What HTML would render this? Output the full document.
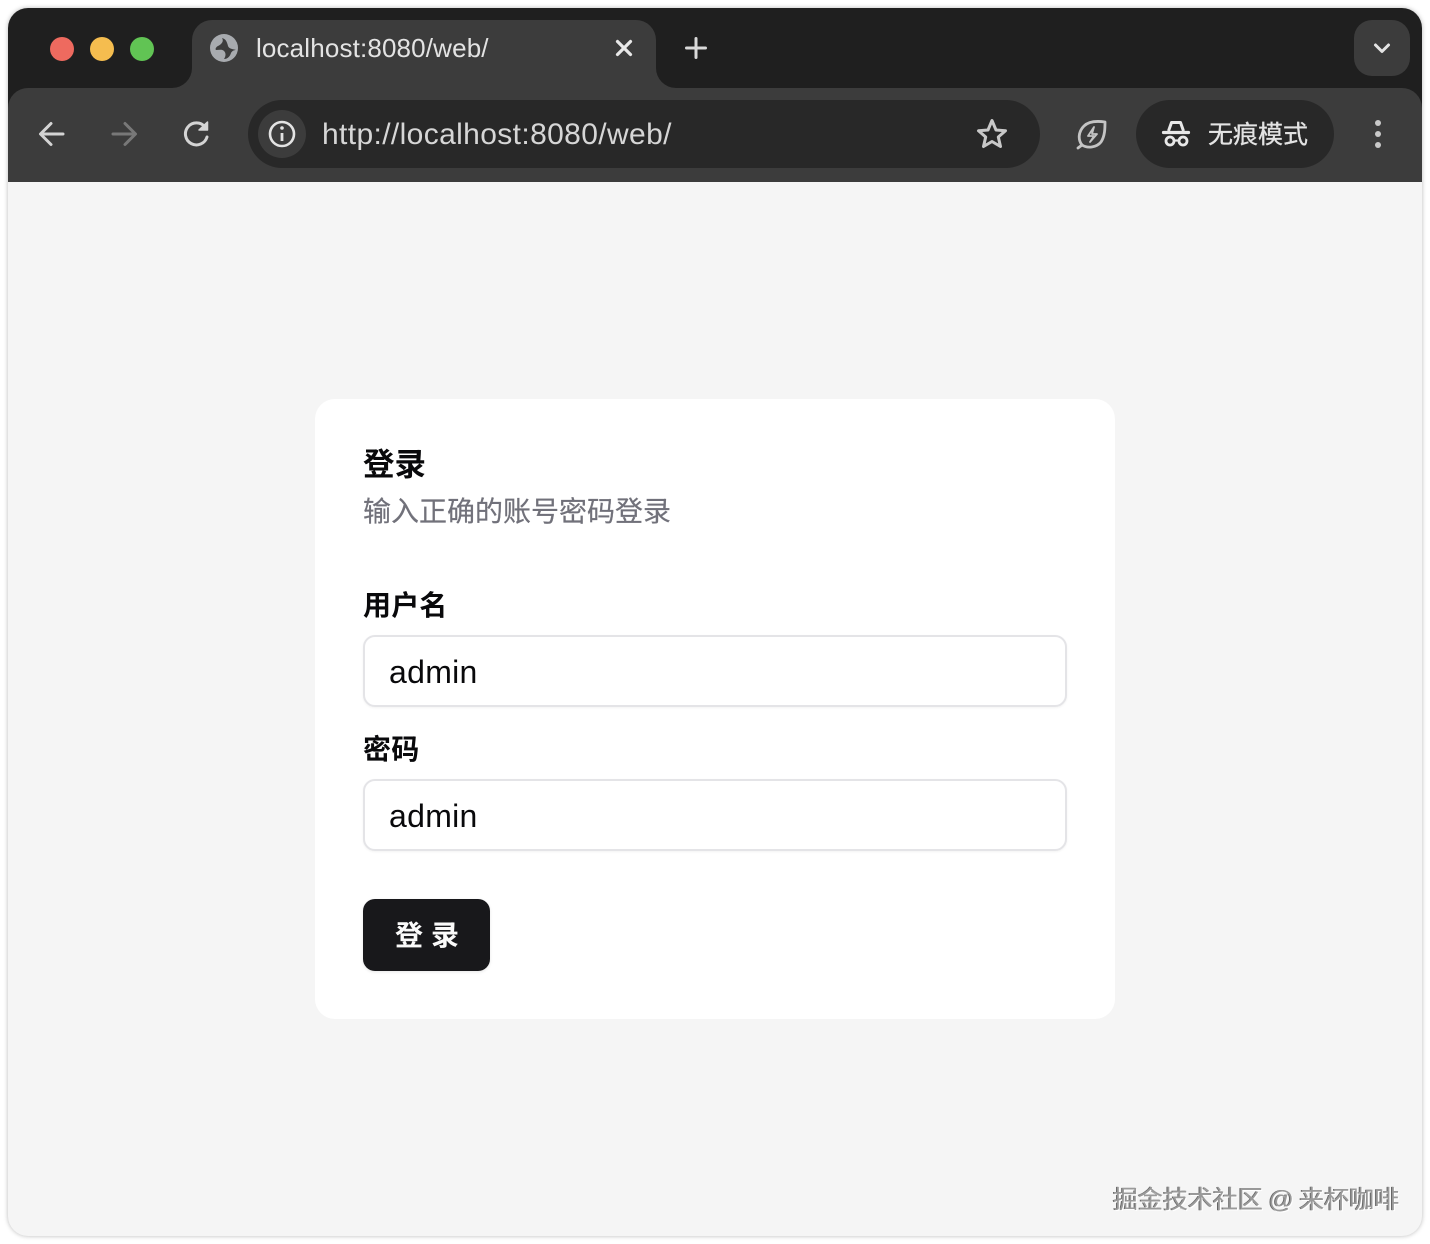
<!DOCTYPE html>
<html lang="zh">
<head>
<meta charset="utf-8">
<title>登录</title>
<style>
html,body{margin:0;padding:0;background:#fff;}
body{width:1430px;height:1244px;position:relative;overflow:hidden;font-family:"Liberation Sans","Noto Sans CJK SC",sans-serif;}
.abs{position:absolute;white-space:nowrap;}
#win{position:absolute;left:8px;top:8px;width:1414px;height:1228px;border-radius:20px;overflow:hidden;background:#f5f5f5;box-shadow:0 0 5px rgba(0,0,0,.28);}
#layer{position:absolute;left:0;top:0;width:1430px;height:1244px;}
.dot{position:absolute;width:24px;height:24px;border-radius:50%;top:37px;}
.field{position:absolute;left:363px;width:700px;height:68px;border:2px solid #e4e4e7;border-radius:12px;background:#fff;box-shadow:0 1px 2px rgba(0,0,0,.05);font-size:32px;line-height:68px;color:#09090b;}
.field span{position:absolute;left:24px;top:1px;letter-spacing:.3px;}
.lbl{font-size:28px;font-weight:700;color:#09090b;line-height:36px;letter-spacing:.2px;}
</style>
</head>
<body>
<div id="win"></div>
<div id="layer">
  <svg class="abs" style="left:8px;top:8px" width="1414" height="174" viewBox="8 8 1414 174">
    <path d="M28 8H1402a20 20 0 0 1 20 20V182H8V28A20 20 0 0 1 28 8Z" fill="#1f1f1f"/>
    <path d="M8 182V108A20 20 0 0 1 28 88H1402A20 20 0 0 1 1422 108V182Z" fill="#3c3c3c"/>
    <path d="M172 88A20 20 0 0 0 192 68V40A20 20 0 0 1 212 20H636A20 20 0 0 1 656 40V68A20 20 0 0 0 676 88Z" fill="#3c3c3c"/>
    <rect x="1354" y="20" width="56" height="56" rx="18" fill="#3c3c3c"/>
    <path d="M1375.500 45L1382 51.500L1388.500 45" fill="none" stroke="#e3e3e3" stroke-width="3" stroke-linecap="round" stroke-linejoin="round"/>
    <rect x="248" y="100" width="792" height="68" rx="34" fill="#282828"/>
    <circle cx="282" cy="134" r="24" fill="#3c3c3c"/>
    <rect x="1136" y="100" width="198" height="68" rx="34" fill="#282828"/>

    <circle cx="224" cy="48" r="14" fill="#a8abaf"/>
    <path d="M222 38C224 41 222 44 218 46C216 47 215 49 216 50C219 50 222 49 224 51C226 53 226 56 224 59C228 59 230 56 231 53C232 51 234 50 236 50C233 49 229 49 228 46C227 42 226 39 222 38Z" fill="#3c3c3c"/>
    <path d="M617.500 41.500L630.500 54.500M630.500 41.500L617.500 54.500" stroke="#e8e8e8" stroke-width="3.200" stroke-linecap="round"/>
    <path d="M696 38.500V57.500M686.500 48H705.500" stroke="#d9d9d9" stroke-width="3" stroke-linecap="round"/>

    <path d="M63 134H41.500M51 123.500L40.500 134L51 144.500" fill="none" stroke="#d4d4d4" stroke-width="3" stroke-linecap="round" stroke-linejoin="round"/>
    <path d="M113 134H134.500M125 123.500L135.500 134L125 144.500" fill="none" stroke="#787878" stroke-width="3" stroke-linecap="round" stroke-linejoin="round"/>
    <path d="M205 127A11 11 0 1 0 207 137" fill="none" stroke="#d4d4d4" stroke-width="3" stroke-linecap="round"/>
    <path d="M199 130H207.500V122Z" fill="#d4d4d4" stroke="#d4d4d4" stroke-width="1.500" stroke-linejoin="round"/>

    <circle cx="282" cy="134" r="12" fill="none" stroke="#e3e3e3" stroke-width="2.600"/>
    <path d="M282 133V141" stroke="#e3e3e3" stroke-width="2.800"/>
    <circle cx="282" cy="128" r="1.800" fill="#e3e3e3"/>

    <path d="M992 120.500L996 130L1005.500 130.800L998.300 137L1000.500 146.500L992 141.500L983.500 146.500L985.700 137L978.500 130.800L988 130Z" fill="none" stroke="#c9c9c9" stroke-width="3" stroke-linejoin="round"/>

    <path d="M1105 122C1098 121 1089 121 1084 126C1078 132 1078 140 1082 145C1088 149 1097 147 1101 142C1105 136 1105 128 1105 122Z" fill="none" stroke="#c4c4c4" stroke-width="2.800" stroke-linejoin="round"/>
    <path d="M1082 145L1078 148" stroke="#c4c4c4" stroke-width="2.800" stroke-linecap="round"/>
    <path d="M1094 127L1088 136H1094L1090 142L1097 134H1092Z" fill="none" stroke="#c4c4c4" stroke-width="1.800" stroke-linejoin="round"/>

    <path d="M1168.500 131L1171.500 122.500H1180.500L1183.500 131" fill="none" stroke="#e8e8e8" stroke-width="3" stroke-linejoin="round"/>
    <path d="M1163.500 132.500H1188.500" stroke="#e8e8e8" stroke-width="3.200" stroke-linecap="round"/>
    <circle cx="1170" cy="141" r="4" fill="none" stroke="#e8e8e8" stroke-width="2.800"/>
    <circle cx="1183" cy="141" r="4" fill="none" stroke="#e8e8e8" stroke-width="2.800"/>
    <path d="M1174 140.500H1179" stroke="#e8e8e8" stroke-width="2.200"/>

    <circle cx="1378" cy="123" r="3" fill="#c9c9c9"/>
    <circle cx="1378" cy="134" r="3" fill="#c9c9c9"/>
    <circle cx="1378" cy="145" r="3" fill="#c9c9c9"/>
  </svg>

  <div class="dot" style="left:50px;background:#ee6a5f"></div>
  <div class="dot" style="left:90px;background:#f5bd4f"></div>
  <div class="dot" style="left:130px;background:#61c454"></div>

  <div class="abs" style="left:256px;top:32px;font-size:26px;line-height:32px;letter-spacing:.15px;color:#e3e3e3;">localhost:8080/web/</div>
  <div class="abs" style="left:322px;top:117px;font-size:30px;line-height:36px;letter-spacing:.37px;color:#d6d6d6;">http://localhost:8080/web/</div>
  <div class="abs" style="left:1208px;top:118px;font-size:25px;line-height:34px;color:#e3e3e3;-webkit-text-stroke:.3px #e3e3e3;">无痕模式</div>

  <div class="abs" style="left:315px;top:399px;width:800px;height:620px;background:#fff;border-radius:20px;"></div>
  <div class="abs" style="left:363px;top:444px;font-size:31.500px;line-height:40px;font-weight:700;color:#09090b;">登录</div>
  <div class="abs" style="left:363px;top:494px;font-size:28px;line-height:36px;color:#71717a;-webkit-text-stroke:.2px #71717a;">输入正确的账号密码登录</div>
  <div class="abs lbl" style="left:363px;top:588px;">用户名</div>
  <div class="field" style="top:635px;"><span>admin</span></div>
  <div class="abs lbl" style="left:363px;top:732px;">密码</div>
  <div class="field" style="top:779px;"><span>admin</span></div>
  <div class="abs" style="left:363px;top:899px;width:127px;height:72px;background:#18181b;border-radius:12px;box-shadow:0 1px 3px rgba(0,0,0,.1);"></div>
  <div class="abs" style="left:395px;top:918px;font-size:28px;line-height:36px;font-weight:700;letter-spacing:8px;color:#fafafa;">登录</div>

  <div class="abs" style="left:1113px;top:1183px;font-size:25px;line-height:34px;word-spacing:-1.500px;color:#9a9a9a;text-shadow:1px 1px 0 #fff,-1px 0 0 #666;">掘金技术社区 @ 来杯咖啡</div>
</div>
</body>
</html>
